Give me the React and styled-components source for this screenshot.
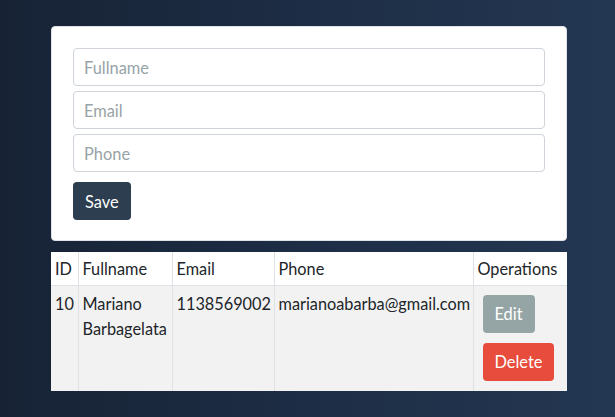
import React from "react";
import styled, { createGlobalStyle } from "styled-components";

const GlobalStyle = createGlobalStyle`
  html, body {
    margin: 0;
    padding: 0;
    min-height: 100%;
  }
  body {
    min-height: 417px;
    background: linear-gradient(90deg, #172335 0%, #1d2d45 50%, #243752 100%);
    font-family: Lato, "Open Sans", sans-serif;
    color: #212529;
  }
`;

const Page = styled.div`
  width: 516px;
  margin: 0 0 0 51px;
  padding-top: 26px;
  display: flex;
  flex-direction: column;
  gap: 11px;
`;

const FormCard = styled.form`
  background: #ffffff;
  border: 1px solid #dfe3e8;
  border-radius: 4px;
  padding: 21px 21px 20px 21px;
  display: flex;
  flex-direction: column;
  gap: 5px;
`;

const Field = styled.input`
  box-sizing: border-box;
  width: 100%;
  height: 38px;
  padding: 0 10px;
  border: 1px solid #ced4da;
  border-radius: 4px;
  font-family: inherit;
  font-size: 16.4px;
  color: #212529;
  outline: none;

  &::placeholder {
    color: #97a3a6;
  }
`;

const Button = styled.button`
  align-self: flex-start;
  height: 38px;
  padding: 0 ${(p) => p.$padX || 12}px;
  border: 0;
  border-radius: 4px;
  background: ${(p) => p.$bg};
  color: #ffffff;
  font-family: inherit;
  font-size: 16.4px;
  cursor: pointer;
`;

const SaveButton = styled(Button)`
  margin-top: 5px;
`;

const Table = styled.table`
  width: 516px;
  border-collapse: collapse;
  table-layout: fixed;
  font-size: 16.3px;
`;

const HeadRow = styled.tr`
  background: #ffffff;
  height: 33px;
`;

const BodyRow = styled.tr`
  background: #f2f2f2;
  height: 106px;
`;

const Th = styled.th`
  text-align: left;
  font-weight: 400;
  padding: 0 4px;
  border: 1px solid #dee2e6;
  border-top: 0;
  white-space: nowrap;
  &:first-child { border-left: 0; }
  &:last-child { border-right: 0; }
`;

const Td = styled.td`
  vertical-align: top;
  padding: 5px 4px;
  line-height: 25px;
  border: 1px solid #dee2e6;
  border-bottom: 0;
  &:first-child { border-left: 0; }
  &:last-child { border-right: 0; }
`;

const Ops = styled.div`
  display: flex;
  flex-direction: column;
  align-items: flex-start;
  gap: 10px;
  padding: 4px 0 4px 5px;
`;

const columns = [
  { label: "ID", width: 27 },
  { label: "Fullname", width: 94 },
  { label: "Email", width: 102 },
  { label: "Phone", width: 199 },
  { label: "Operations", width: 94 },
];

const users = [
  {
    id: 10,
    fullname: "Mariano Barbagelata",
    email: "1138569002",
    phone: "marianoabarba@gmail.com",
  },
];

export default function App() {
  return (
    <>
      <GlobalStyle />
      <Page>
        <FormCard onSubmit={(e) => e.preventDefault()}>
          <Field placeholder="Fullname" />
          <Field placeholder="Email" />
          <Field placeholder="Phone" />
          <SaveButton $bg="#2c3e50" $padX={12}>Save</SaveButton>
        </FormCard>

        <Table>
          <colgroup>
            {columns.map((c) => (
              <col key={c.label} style={{ width: c.width }} />
            ))}
          </colgroup>
          <thead>
            <HeadRow>
              {columns.map((c) => (
                <Th key={c.label}>{c.label}</Th>
              ))}
            </HeadRow>
          </thead>
          <tbody>
            {users.map((u) => (
              <BodyRow key={u.id}>
                <Td>{u.id}</Td>
                <Td>{u.fullname}</Td>
                <Td>{u.email}</Td>
                <Td>{u.phone}</Td>
                <Td>
                  <Ops>
                    <Button $bg="#95a5a6" $padX={12}>Edit</Button>
                    <Button $bg="#e74c3c" $padX={12}>Delete</Button>
                  </Ops>
                </Td>
              </BodyRow>
            ))}
          </tbody>
        </Table>
      </Page>
    </>
  );
}
